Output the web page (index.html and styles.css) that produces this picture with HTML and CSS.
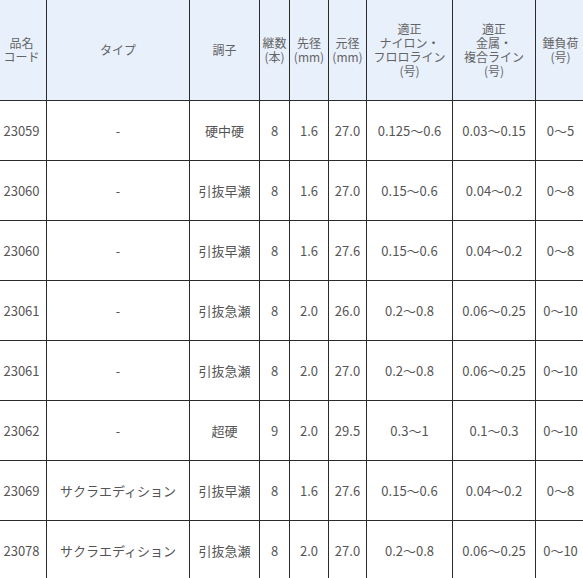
FILE: index.html
```html
<!DOCTYPE html>
<html lang="ja">
<head>
<meta charset="utf-8">
<title>スペック表</title>
<link rel="stylesheet" href="styles.css">
</head>
<body>
<div class="wrap">
<table class="spec">
<colgroup>
<col class="c-code"><col class="c-type"><col class="c-tone"><col class="c-num"><col class="c-tip"><col class="c-base"><col class="c-nylon"><col class="c-metal"><col class="c-sinker">
</colgroup>
<thead>
<tr>
<th>品名<br>コード</th>
<th>タイプ</th>
<th>調子</th>
<th>継数<br>(本)</th>
<th>先径<br>(mm)</th>
<th>元径<br>(mm)</th>
<th>適正<br>ナイロン・<br>フロロライン<br>(号)</th>
<th>適正<br>金属・<br>複合ライン<br>(号)</th>
<th>錘負荷<br>(号)</th>
</tr>
</thead>
<tbody>
<tr><td>23059</td><td>-</td><td>硬中硬</td><td>8</td><td>1.6</td><td>27.0</td><td>0.125～0.6</td><td>0.03～0.15</td><td>0～5</td></tr>
<tr><td>23060</td><td>-</td><td>引抜早瀬</td><td>8</td><td>1.6</td><td>27.0</td><td>0.15～0.6</td><td>0.04～0.2</td><td>0～8</td></tr>
<tr><td>23060</td><td>-</td><td>引抜早瀬</td><td>8</td><td>1.6</td><td>27.6</td><td>0.15～0.6</td><td>0.04～0.2</td><td>0～8</td></tr>
<tr><td>23061</td><td>-</td><td>引抜急瀬</td><td>8</td><td>2.0</td><td>26.0</td><td>0.2～0.8</td><td>0.06～0.25</td><td>0～10</td></tr>
<tr><td>23061</td><td>-</td><td>引抜急瀬</td><td>8</td><td>2.0</td><td>27.0</td><td>0.2～0.8</td><td>0.06～0.25</td><td>0～10</td></tr>
<tr><td>23062</td><td>-</td><td>超硬</td><td>9</td><td>2.0</td><td>29.5</td><td>0.3～1</td><td>0.1～0.3</td><td>0～10</td></tr>
<tr><td>23069</td><td>サクラエディション</td><td>引抜早瀬</td><td>8</td><td>1.6</td><td>27.6</td><td>0.15～0.6</td><td>0.04～0.2</td><td>0～8</td></tr>
<tr><td>23078</td><td>サクラエディション</td><td>引抜急瀬</td><td>8</td><td>2.0</td><td>27.0</td><td>0.2～0.8</td><td>0.06～0.25</td><td>0～10</td></tr>
</tbody>
</table>
</div>
</body>
</html>
```

FILE: styles.css
```css
html, body {
  margin: 0;
  padding: 0;
  background: #ffffff;
  overflow: hidden;
}

.wrap {
  width: 583px;
  height: 578px;
  overflow: hidden;
}

.spec {
  border-collapse: collapse;
  table-layout: fixed;
  width: 589px;
  margin: -1px 0 0 -4px;
  font-family: "Noto Sans CJK JP", "Noto Sans", sans-serif;
}

.c-code { width: 50px; }
.c-type { width: 143px; }
.c-tone { width: 70px; }
.c-num { width: 30px; }
.c-tip { width: 39px; }
.c-base { width: 38px; }
.c-nylon { width: 86px; }
.c-metal { width: 83px; }
.c-sinker { width: 50px; }

.spec th,
.spec td {
  border: 1px solid #2b2b2b;
  padding: 0;
  text-align: center;
  vertical-align: middle;
  white-space: nowrap;
  overflow: hidden;
}

.spec th {
  height: 100px;
  background: #e8f0fc;
  color: #646464;
  font-size: 12px;
  line-height: 14px;
  font-weight: normal;
}

.spec td {
  height: 59px;
  color: #555555;
  font-size: 13px;
  line-height: 16px;
}
```
